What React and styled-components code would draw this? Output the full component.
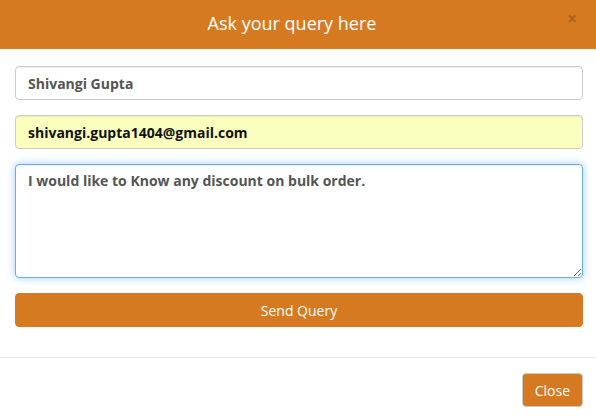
import React, { useEffect, useRef } from 'react';
import styled, { createGlobalStyle } from 'styled-components';

const GlobalStyle = createGlobalStyle`
  * { box-sizing: border-box; }
  body {
    margin: 0;
    background: #fff;
    font-family: "Open Sans", "Liberation Sans", sans-serif;
  }
`;

const Modal = styled.div`
  width: 596px;
  background: #fff;
`;

const Header = styled.div`
  position: relative;
  height: 49px;
  background: #d67a22;
  display: flex;
  align-items: center;
  justify-content: center;
  padding-right: 12px;
`;

const Title = styled.h4`
  margin: 0 0 3px;
  font-size: 18px;
  font-weight: 400;
  color: #fff;
`;

const CloseX = styled.button`
  position: absolute;
  right: 19px;
  top: 10px;
  border: 0;
  background: none;
  padding: 0;
  font-family: "Open Sans", sans-serif;
  font-size: 17px;
  font-weight: 700;
  line-height: 1;
  color: #000;
  opacity: 0.2;
`;

const Body = styled.form`
  padding: 17px 13px 30px 15px;
  display: flex;
  flex-direction: column;
  gap: 15px;
`;

const Field = styled.input`
  height: 34px;
  width: 100%;
  padding: 6px 12px;
  border: 1px solid #ccc;
  border-radius: 4px;
  font-family: inherit;
  font-size: 14px;
  font-weight: 700;
  color: ${p => (p.$autofill ? '#111' : '#555')};
  background: ${p => (p.$autofill ? '#faffbd' : '#fff')};
  box-shadow: inset 0 1px 1px rgba(0, 0, 0, 0.075);
  outline: none;
`;

const Message = styled.textarea`
  height: 114px;
  width: 100%;
  padding: 6px 12px;
  border: 1px solid #66afe9;
  border-radius: 4px;
  font-family: inherit;
  font-size: 14px;
  font-weight: 700;
  line-height: 1.42857;
  color: #555;
  caret-color: #222;
  resize: vertical;
  outline: none;
  box-shadow: inset 0 1px 1px rgba(0, 0, 0, 0.075), 0 0 8px rgba(102, 175, 233, 0.6);
`;

const Button = styled.button`
  height: 34px;
  width: ${p => (p.$block ? '100%' : 'auto')};
  padding: 0 12px;
  border: 1px solid ${p => (p.$block ? '#d67a22' : '#c9c9c9')};
  border-radius: 4px;
  background: #d67a22;
  color: #fff;
  font-family: inherit;
  font-size: 14px;
  font-weight: 400;
`;

const Footer = styled.div`
  border-top: 1px solid #e5e5e5;
  padding: 15px 13px 15px 15px;
  display: flex;
  justify-content: flex-end;
`;

const App = () => {
  const msgRef = useRef(null);
  useEffect(() => {
    const el = msgRef.current;
    if (el) {
      el.focus();
      el.setSelectionRange(el.value.length, el.value.length);
    }
  }, []);

  return (
    <>
      <GlobalStyle />
      <Modal>
        <Header>
          <Title>Ask your query here</Title>
          <CloseX type="button">×</CloseX>
        </Header>
        <Body onSubmit={e => e.preventDefault()}>
          <Field defaultValue="Shivangi Gupta" />
          <Field $autofill defaultValue="shivangi.gupta1404@gmail.com" />
          <Message ref={msgRef} defaultValue="I would like to Know any discount on bulk order." />
          <Button $block type="submit">Send Query</Button>
        </Body>
        <Footer>
          <Button type="button">Close</Button>
        </Footer>
      </Modal>
    </>
  );
};

export default App;
